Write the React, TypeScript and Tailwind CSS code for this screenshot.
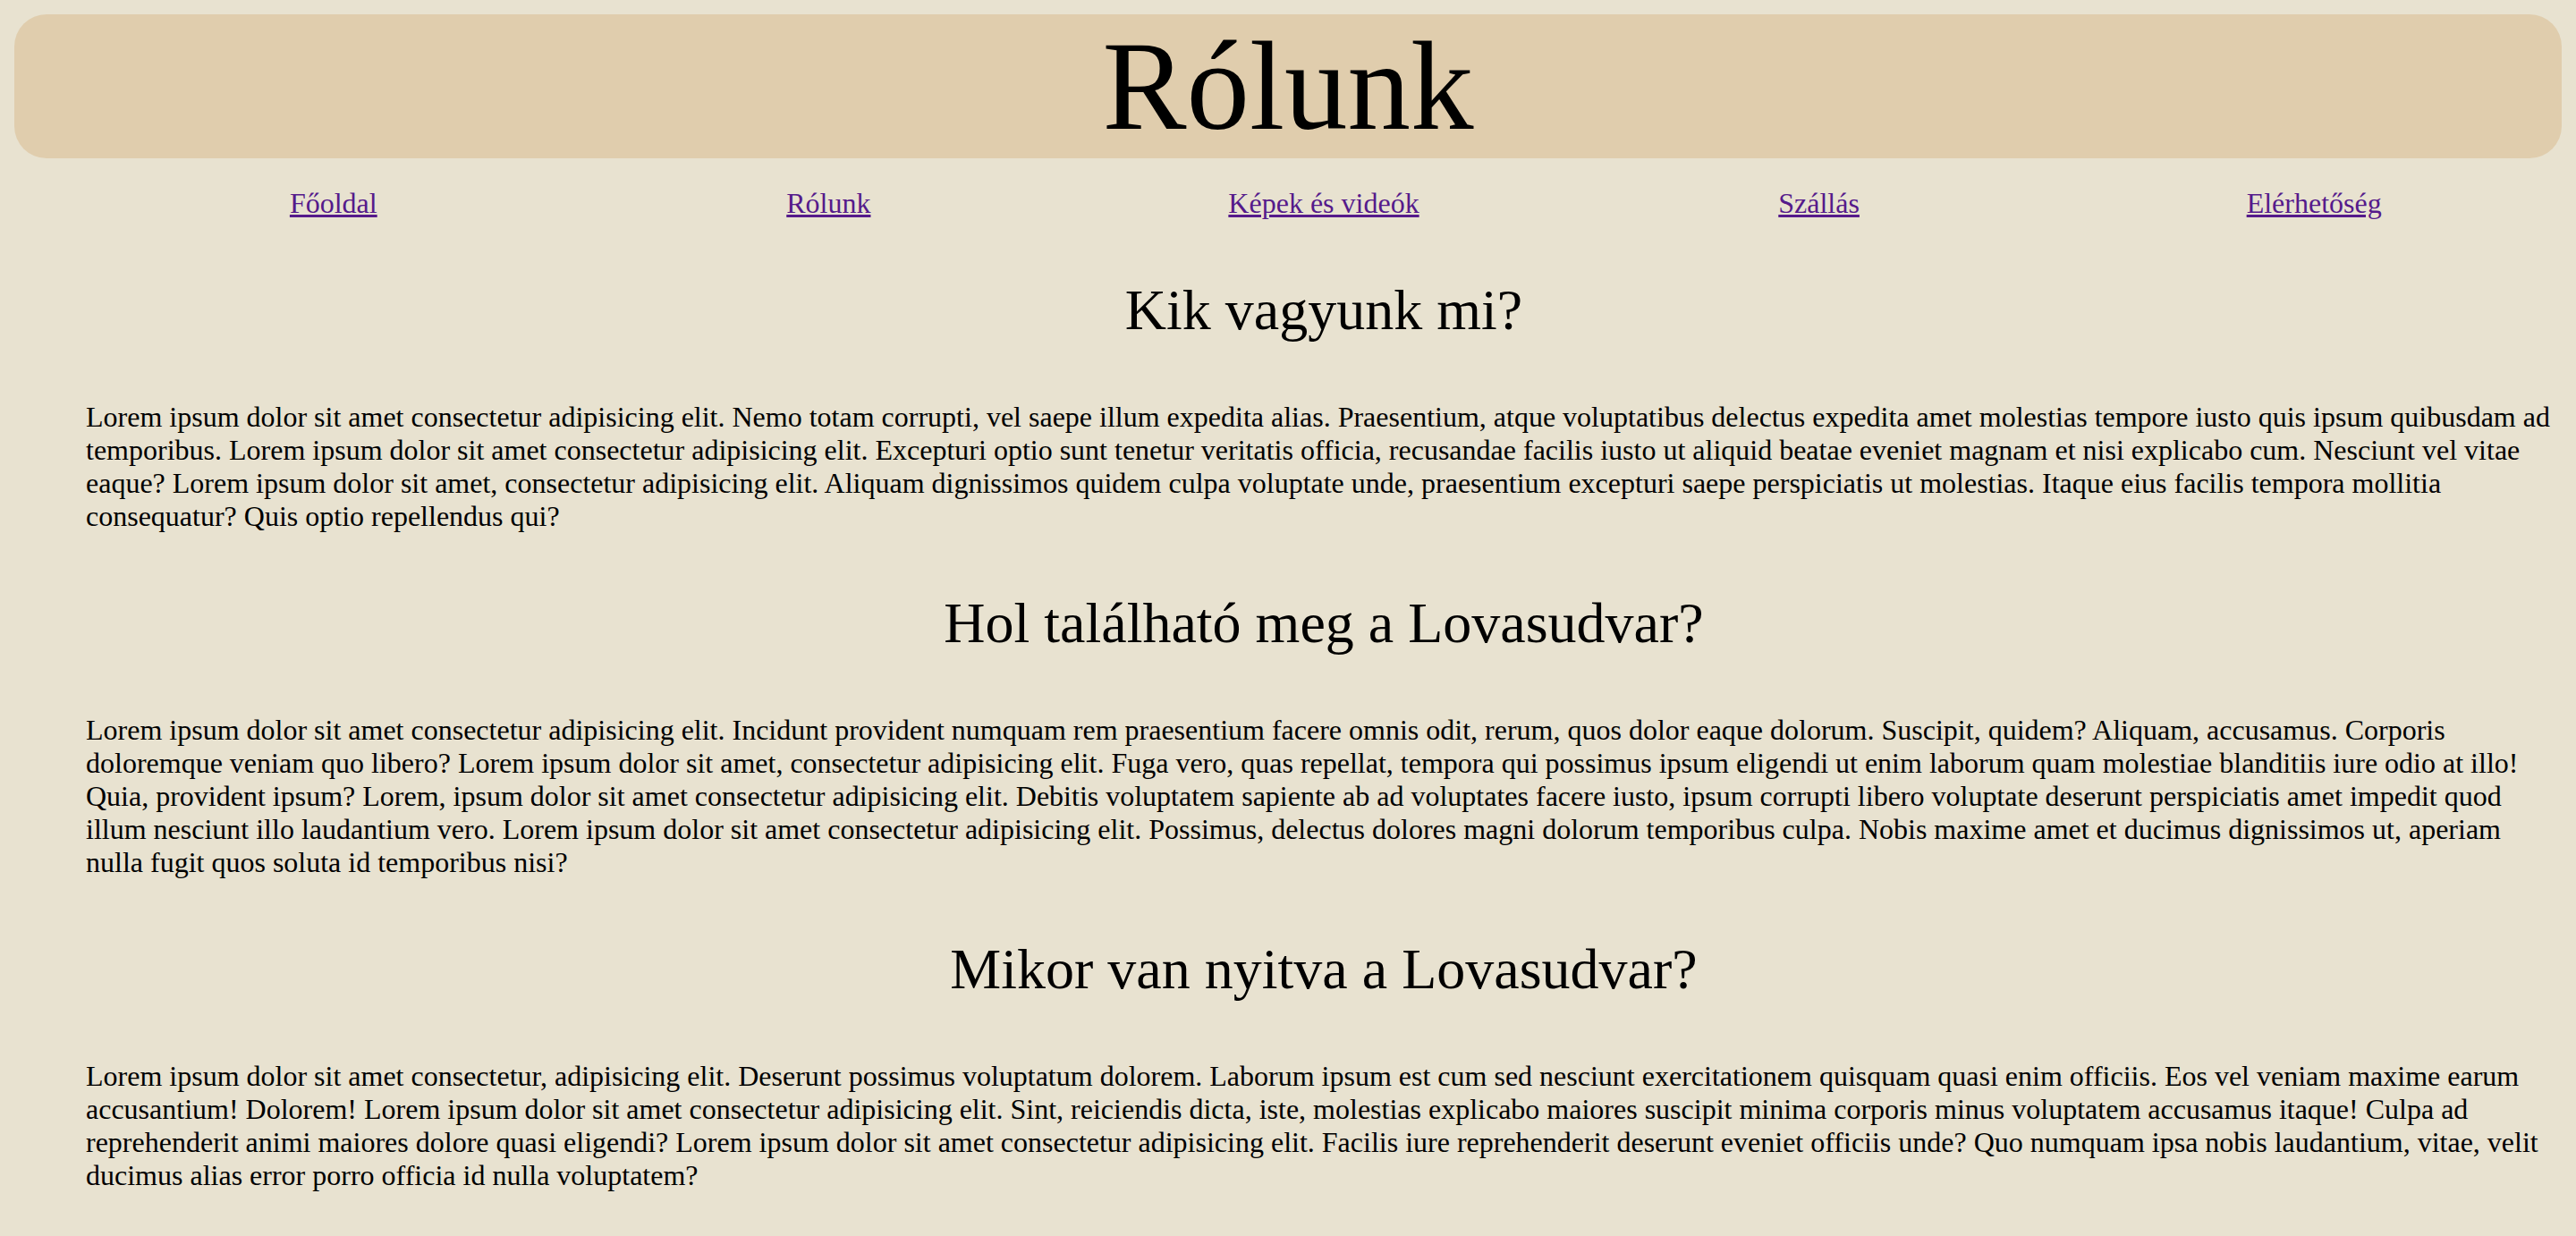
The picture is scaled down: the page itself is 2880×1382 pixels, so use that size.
const links = ["Főoldal", "Rólunk", "Képek és videók", "Szállás", "Elérhetőség"];

const sections = [
  {
    title: "Kik vagyunk mi?",
    text: "Lorem ipsum dolor sit amet consectetur adipisicing elit. Nemo totam corrupti, vel saepe illum expedita alias. Praesentium, atque voluptatibus delectus expedita amet molestias tempore iusto quis ipsum quibusdam ad temporibus. Lorem ipsum dolor sit amet consectetur adipisicing elit. Excepturi optio sunt tenetur veritatis officia, recusandae facilis iusto ut aliquid beatae eveniet magnam et nisi explicabo cum. Nesciunt vel vitae eaque? Lorem ipsum dolor sit amet, consectetur adipisicing elit. Aliquam dignissimos quidem culpa voluptate unde, praesentium excepturi saepe perspiciatis ut molestias. Itaque eius facilis tempora mollitia consequatur? Quis optio repellendus qui?",
  },
  {
    title: "Hol található meg a Lovasudvar?",
    text: "Lorem ipsum dolor sit amet consectetur adipisicing elit. Incidunt provident numquam rem praesentium facere omnis odit, rerum, quos dolor eaque dolorum. Suscipit, quidem? Aliquam, accusamus. Corporis doloremque veniam quo libero? Lorem ipsum dolor sit amet, consectetur adipisicing elit. Fuga vero, quas repellat, tempora qui possimus ipsum eligendi ut enim laborum quam molestiae blanditiis iure odio at illo! Quia, provident ipsum? Lorem, ipsum dolor sit amet consectetur adipisicing elit. Debitis voluptatem sapiente ab ad voluptates facere iusto, ipsum corrupti libero voluptate deserunt perspiciatis amet impedit quod illum nesciunt illo laudantium vero. Lorem ipsum dolor sit amet consectetur adipisicing elit. Possimus, delectus dolores magni dolorum temporibus culpa. Nobis maxime amet et ducimus dignissimos ut, aperiam nulla fugit quos soluta id temporibus nisi?",
  },
  {
    title: "Mikor van nyitva a Lovasudvar?",
    text: "Lorem ipsum dolor sit amet consectetur, adipisicing elit. Deserunt possimus voluptatum dolorem. Laborum ipsum est cum sed nesciunt exercitationem quisquam quasi enim officiis. Eos vel veniam maxime earum accusantium! Dolorem! Lorem ipsum dolor sit amet consectetur adipisicing elit. Sint, reiciendis dicta, iste, molestias explicabo maiores suscipit minima corporis minus voluptatem accusamus itaque! Culpa ad reprehenderit animi maiores dolore quasi eligendi? Lorem ipsum dolor sit amet consectetur adipisicing elit. Facilis iure reprehenderit deserunt eveniet officiis unde? Quo numquam ipsa nobis laudantium, vitae, velit ducimus alias error porro officia id nulla voluptatem?",
  },
];

export default function App() {
  return (
    <div className="min-h-screen bg-[#e8e2d0] p-4 font-['Liberation_Serif','Times_New_Roman',serif] text-[32px] leading-[normal] text-black">
      {/* Header */}
      <div className="rounded-[36px] bg-[#e0cdad]">
        <h1 className="text-center text-[141px] leading-[161px] font-normal">Rólunk</h1>
      </div>

      <div className="ml-20">
        {/* Nav */}
        <ul className="my-8 grid grid-cols-5 text-center">
          {links.map((l) => (
            <li key={l}>
              <a href="#" className="text-[#551a8b] underline">
                {l}
              </a>
            </li>
          ))}
        </ul>

        {sections.map((s) => (
          <section key={s.title}>
            <h2 className="my-16 text-center text-[64px] font-normal">{s.title}</h2>
            <p className="mt-8 mb-7">{s.text}</p>
          </section>
        ))}
      </div>
    </div>
  );
}
